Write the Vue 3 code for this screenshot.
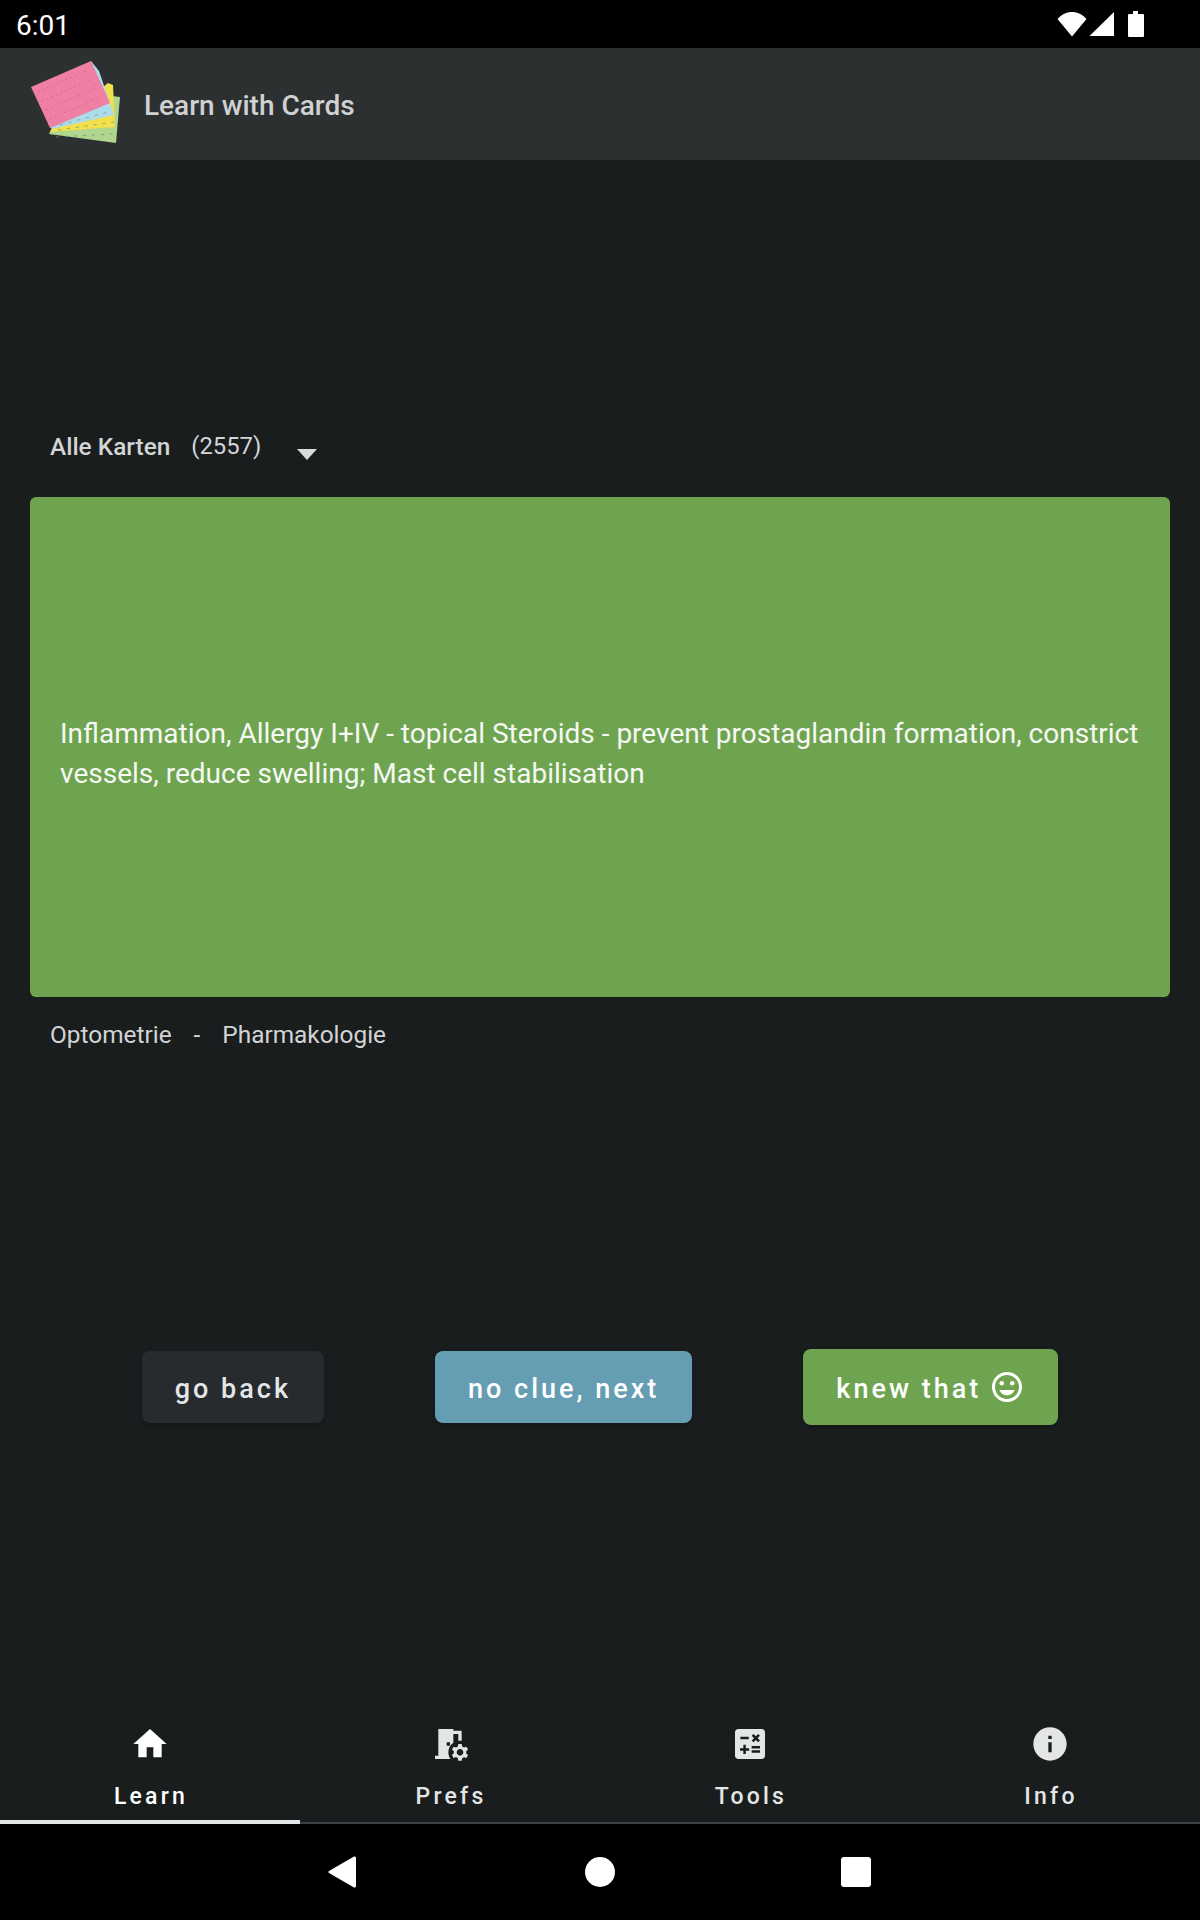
<template>
  <div class="screen">
    <!-- Statusleiste -->
    <div class="statusbar">
      <span class="time">6:01</span>
      <div class="status-icons">
        <svg width="30" height="26" viewBox="0 0 30 26"><path d="M15 25.5 0.5 8C4.5 3.5 9.5 1 15 1s10.500 2.500 14.500 7z" fill="#fff" /></svg>
        <svg width="26" height="26" viewBox="0 0 26 26"><path d="M0.500 25 25 1v24z" fill="#fff" /></svg>
        <svg class="battery" width="18" height="28" viewBox="0 0 18 28"><path d="M6 1h5v3h5a1 1 0 0 1 1 1v21a1 1 0 0 1-1 1H2a1 1 0 0 1-1-1V5a1 1 0 0 1 1-1h4z" fill="#fff" /></svg>
      </div>
    </div>

    <!-- Toolbar -->
    <header class="toolbar">
      <svg class="logo" width="92" height="86" viewBox="28 58 92 86">
        <polygon points="112,96 120,97 116,143 49,134 52,128" fill="#afd58e" />
        <polygon points="108,83 113,85 115,127 50,132 52,128" fill="#f2df4c" />
        <polygon points="91,61 99,71 114,115 52,129 48,124" fill="#abdcea" />
        <polygon points="31,87 91,61 110,103 50,128" fill="#ef7fa3" />
        <path d="M38 92 88 70M42 101 92 79M46 110 96 88M50 119 100 97" stroke="#d8688f" stroke-width="1" stroke-dasharray="2 3" fill="none" />
        <path d="M60 125 112 111M58 130 114 122M56 137 115 134" stroke="#6f8f70" stroke-width="0.700" stroke-dasharray="3 6" fill="none" />
      </svg>
      <span class="app-title">Learn with Cards</span>
    </header>

    <main class="content">
      <div class="selector">
        <span class="deck">Alle Karten</span>
        <span class="count">(2557)</span>
        <span class="caret"></span>
      </div>

      <div class="card">
        <p>{{ cardText }}</p>
      </div>

      <div class="breadcrumb">
        <span>Optometrie</span>
        <span>-</span>
        <span>Pharmakologie</span>
      </div>

      <div class="actions">
        <button class="btn btn-back">go back</button>
        <button class="btn btn-next">no clue, next</button>
        <button class="btn btn-knew">
          knew that
          <svg width="36" height="36" viewBox="0 0 24 24" fill="#fff">
            <path d="M11.990 2C6.470 2 2 6.480 2 12s4.470 10 9.990 10C17.520 22 22 17.520 22 12S17.520 2 11.990 2zM12 20c-4.420 0-8-3.580-8-8s3.580-8 8-8 8 3.580 8 8-3.580 8-8 8z" />
            <circle cx="15.500" cy="9.500" r="1.500" />
            <circle cx="8.500" cy="9.500" r="1.500" />
            <path d="M12 17.500c2.330 0 4.310-1.460 5.110-3.500H6.890c.8 2.040 2.780 3.500 5.110 3.500z" />
          </svg>
        </button>
      </div>
    </main>

    <!-- Tabs -->
    <nav class="tabs">
      <div v-for="tab in tabs" :key="tab.label" class="tab" :class="{ active: tab.active }">
        <svg width="40" height="40" viewBox="0 0 24 24" :fill="tab.active ? '#fff' : '#e4e5e6'">
          <path v-for="d in tab.paths" :key="d" :d="d" />
        </svg>
        <span>{{ tab.label }}</span>
      </div>
    </nav>

    <!-- Android Navigation -->
    <div class="navbar">
      <svg class="nav-back" width="30" height="34" viewBox="0 0 30 34"><path d="M27 1.500a1.500 1.500 0 0 1 2 1.500v28a1.500 1.500 0 0 1-2 1.500L2 18a1.200 1.200 0 0 1 0-2z" fill="#fff" /></svg>
      <span class="nav-home"></span>
      <span class="nav-square"></span>
    </div>
  </div>
</template>

<script setup>
const cardText =
  'Inflammation, Allergy I+IV - topical Steroids - prevent prostaglandin formation, constrict vessels, reduce swelling; Mast cell stabilisation'

const tabs = [
  {
    label: 'Learn',
    active: true,
    paths: ['M10 20v-6h4v6h5v-8h3L12 3 2 12h3v8z'],
  },
  {
    label: 'Prefs',
    paths: [
      'M14 11.260V6h3v4h2V4h-5V3H5v16H3v2h9.260C11.470 19.870 11 18.490 11 17c0-2.380 1.190-4.470 3-5.740zM10 11h2v2h-2v-2z',
      'M21.690 16.370l1.140-1-1-1.730-1.450.49c-.32-.27-.68-.48-1.080-.63L19 12h-2l-.3 1.490c-.4.15-.76.36-1.080.63l-1.450-.49-1 1.730 1.140 1c-.08.5-.08.76 0 1.260l-1.140 1 1 1.730 1.450-.49c.32.27.68.48 1.080.63L17 22h2l.3-1.490c.4-.15.76-.36 1.080-.63l1.450.49 1-1.730-1.140-1c.08-.51.08-.77 0-1.270zM18 19c-1.100 0-2-.9-2-2s.9-2 2-2 2 .9 2 2-.9 2-2 2z',
    ],
  },
  {
    label: 'Tools',
    paths: [
      'M19 3H5c-1.100 0-2 .9-2 2v14c0 1.100.9 2 2 2h14c1.100 0 2-.9 2-2V5c0-1.100-.9-2-2-2zm-5.970 4.060L14.090 6l1.410 1.410L16.910 6l1.060 1.060-1.410 1.410 1.410 1.410-1.060 1.060-1.410-1.400-1.410 1.410-1.060-1.060 1.410-1.410-1.410-1.420zm-6.780.66h5v1.500h-5v-1.500zM11.500 16h-2v2H8v-2H6v-1.500h2v-2h1.500v2h2V16zm6.500 1.250h-5v-1.500h5v1.500zm0-2.500h-5v-1.500h5v1.500z',
    ],
  },
  {
    label: 'Info',
    paths: ['M12 2C6.480 2 2 6.480 2 12s4.480 10 10 10 10-4.480 10-10S17.520 2 12 2zm1 15h-2v-6h2v6zm0-8h-2V7h2v2z'],
  },
]
</script>

<style>
html, body {
  margin: 0;
  background: #1a1d1e;
}
</style>

<style scoped>
.screen {
  width: 1200px;
  height: 1920px;
  display: flex;
  flex-direction: column;
  background: #1a1d1e;
  font-family: Roboto, "Liberation Sans", sans-serif;
  color: #fff;
}
.statusbar {
  height: 48px;
  background: #000;
  display: flex;
  align-items: center;
  justify-content: space-between;
  padding: 0 55px 0 16px;
  flex-shrink: 0;
}
.time {
  font-size: 28px;
  padding-top: 3px;
}
.status-icons {
  display: flex;
  align-items: center;
  gap: 2px;
}
.battery {
  margin-left: 10px;
}
.toolbar {
  height: 112px;
  background: #2c3031;
  display: flex;
  align-items: center;
  padding-left: 28px;
  flex-shrink: 0;
}
.logo {
  margin-right: 24px;
  margin-top: -6px;
}
.app-title {
  font-size: 28px;
  font-weight: 500;
  color: #cfd1d2;
  padding-top: 2px;
}
.content {
  flex: 1;
  display: flex;
  flex-direction: column;
  padding: 0 30px;
}
.selector {
  margin-top: 268px;
  height: 38px;
  padding-left: 20px;
  padding-bottom: 2px;
  box-sizing: border-box;
  display: flex;
  align-items: center;
  font-size: 24.4px;
  color: #d2d4d5;
}
.deck {
  font-weight: 500;
}
.count {
  margin-left: 21px;
  font-size: 23.8px;
}
.caret {
  margin-left: 36px;
  margin-top: 16px;
  width: 0;
  height: 0;
  border-left: 10px solid transparent;
  border-right: 10px solid transparent;
  border-top: 11px solid #d8dadb;
}
.card {
  margin-top: 31px;
  height: 500px;
  background: #6ea450;
  border-radius: 6px;
  display: flex;
  align-items: center;
  padding: 13px 30px 0;
  box-sizing: border-box;
}
.card p {
  margin: 0;
  font-size: 28px;
  line-height: 40px;
  color: #f6f8f4;
}
.breadcrumb {
  margin-top: 24px;
  padding-left: 20px;
  display: flex;
  gap: 22px;
  font-size: 24.4px;
  line-height: 28px;
  color: #d2d4d5;
}
.actions {
  margin-top: 298px;
  height: 80px;
  display: flex;
  align-items: center;
  justify-content: center;
  gap: 111px;
}
.btn {
  height: 72px;
  border: none;
  border-radius: 8px;
  padding: 3px 33px 0;
  font-family: inherit;
  font-size: 27px;
  font-weight: 500;
  letter-spacing: 3px;
  color: #fff;
  display: flex;
  align-items: center;
  gap: 8px;
  box-shadow: 0 2px 4px rgba(0, 0, 0, 0.25);
}
.btn svg {
  margin-top: -3px;
}
.btn-back {
  background: #272b2d;
  color: #e4e5e6;
}
.btn-next {
  background: #659db2;
}
.btn-knew {
  background: #6ea450;
  height: 76px;
}
.tabs {
  display: flex;
  height: 124px;
  flex-shrink: 0;
  border-bottom: 2px solid #3d4143;
  box-sizing: border-box;
}
.tab {
  flex: 1;
  position: relative;
  display: flex;
  flex-direction: column;
  align-items: center;
  padding-top: 24px;
  box-sizing: border-box;
  color: #e4e5e6;
  font-size: 23px;
  font-weight: 500;
  letter-spacing: 3.2px;
}
.tab span {
  margin-top: 19px;
  padding-left: 2px;
}
.tab.active {
  color: #fff;
}
.tab.active::after {
  content: "";
  position: absolute;
  left: 0;
  right: 0;
  bottom: -2px;
  height: 4px;
  background: #e4e5e6;
}
.navbar {
  height: 96px;
  background: #000;
  flex-shrink: 0;
  position: relative;
}
.nav-back {
  position: absolute;
  left: 327px;
  top: 31px;
}
.nav-home {
  position: absolute;
  left: 585px;
  top: 33px;
  width: 30px;
  height: 30px;
  border-radius: 50%;
  background: #fff;
}
.nav-square {
  position: absolute;
  left: 841px;
  top: 33px;
  width: 30px;
  height: 30px;
  border-radius: 3px;
  background: #fff;
}
</style>
